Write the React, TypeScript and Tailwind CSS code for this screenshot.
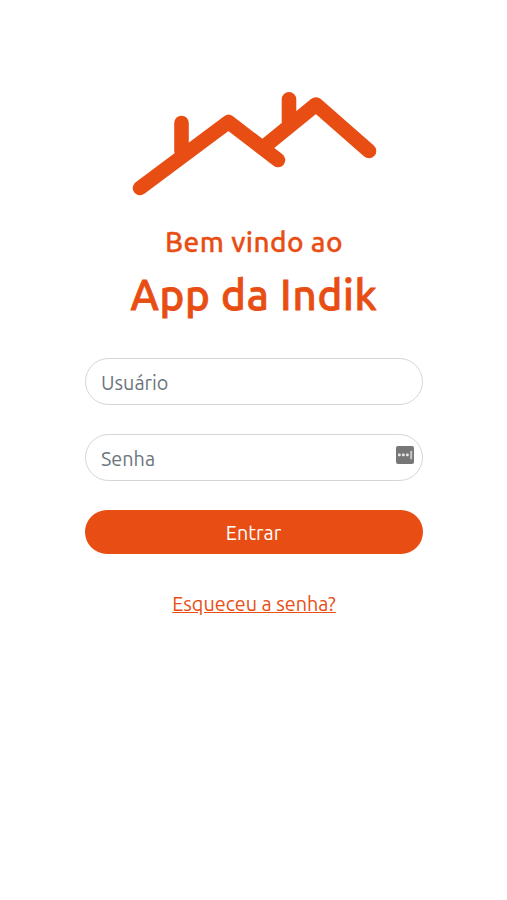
import { useState } from "react"

const inputClass =
  "block h-[47px] w-full rounded-full border border-[#d3d6d9] bg-white pl-[15.500px] pr-10 pt-[2px] text-[19.800px] text-[#6c757d] outline-none placeholder:text-[#6c757d]"

const Logo = () => (
  <svg
    className="h-[106px] w-[246px]"
    viewBox="0 0 246 106"
    fill="none"
    stroke="#e84e13"
    strokeWidth="14.6"
    strokeLinecap="round"
    strokeLinejoin="round"
  >
    <path d="M9 97 97.500 31 147 69" />
    <path d="M50.500 32v28" />
    <path strokeLinecap="butt" d="M131 57.500l54-44" />
    <path d="M185 13.500 238 60" />
    <path d="M158 8.300v22" />
  </svg>
)

const PasswordIcon = () => (
  <svg className="h-[18px] w-[18px]" viewBox="0 0 18 18">
    <rect width="18" height="18" rx="2" fill="#777" />
    <rect x="2" y="7.500" width="2.700" height="2.700" rx="0.800" fill="#e8e8e8" />
    <rect x="6" y="7.500" width="2.700" height="2.700" rx="0.800" fill="#e8e8e8" />
    <rect x="10" y="7.500" width="2.700" height="2.700" rx="0.800" fill="#e8e8e8" />
    <rect x="14.200" y="4.700" width="2" height="8.500" rx="0.600" fill="#c8c8c8" />
  </svg>
)

const App = () => {
  const [user, setUser] = useState("")
  const [password, setPassword] = useState("")

  return (
    <div className="flex min-h-screen flex-col items-center bg-white pt-[91px] font-['Ubuntu','Noto_Sans',sans-serif] text-[#e84e13]">
      <Logo />

      <h1 className="mt-[25px] flex flex-col items-center font-medium">
        <span className="whitespace-nowrap pl-px text-[28px] leading-[40px] tracking-[0.4px] [-webkit-text-stroke:0.3px_#e84e13]">
          Bem vindo ao
        </span>
        <span className="mt-[5px] whitespace-nowrap pl-px text-[42px] leading-[56px] tracking-[0.75px] [-webkit-text-stroke:0.8px_#e84e13]">
          App da Indik
        </span>
      </h1>

      <form className="mt-[35px] w-[338px]" onSubmit={(e) => e.preventDefault()}>
        <input
          className={inputClass}
          type="text"
          placeholder="Usuário"
          value={user}
          onChange={(e) => setUser(e.target.value)}
        />

        <div className="relative mt-[29px]">
          <input
            className={inputClass}
            type="password"
            placeholder="Senha"
            value={password}
            onChange={(e) => setPassword(e.target.value)}
          />
          <span className="absolute right-[9px] top-[12px]">
            <PasswordIcon />
          </span>
        </div>

        <button
          type="submit"
          className="mt-[29px] block h-[44px] w-full rounded-full bg-[#e84e13] pt-[3px] text-[19.800px] text-white"
        >
          Entrar
        </button>
      </form>

      <a href="#" className="mt-[36px] whitespace-nowrap pl-px text-[19.800px] leading-[28px] underline">
        Esqueceu a senha?
      </a>
    </div>
  )
}

export default App
